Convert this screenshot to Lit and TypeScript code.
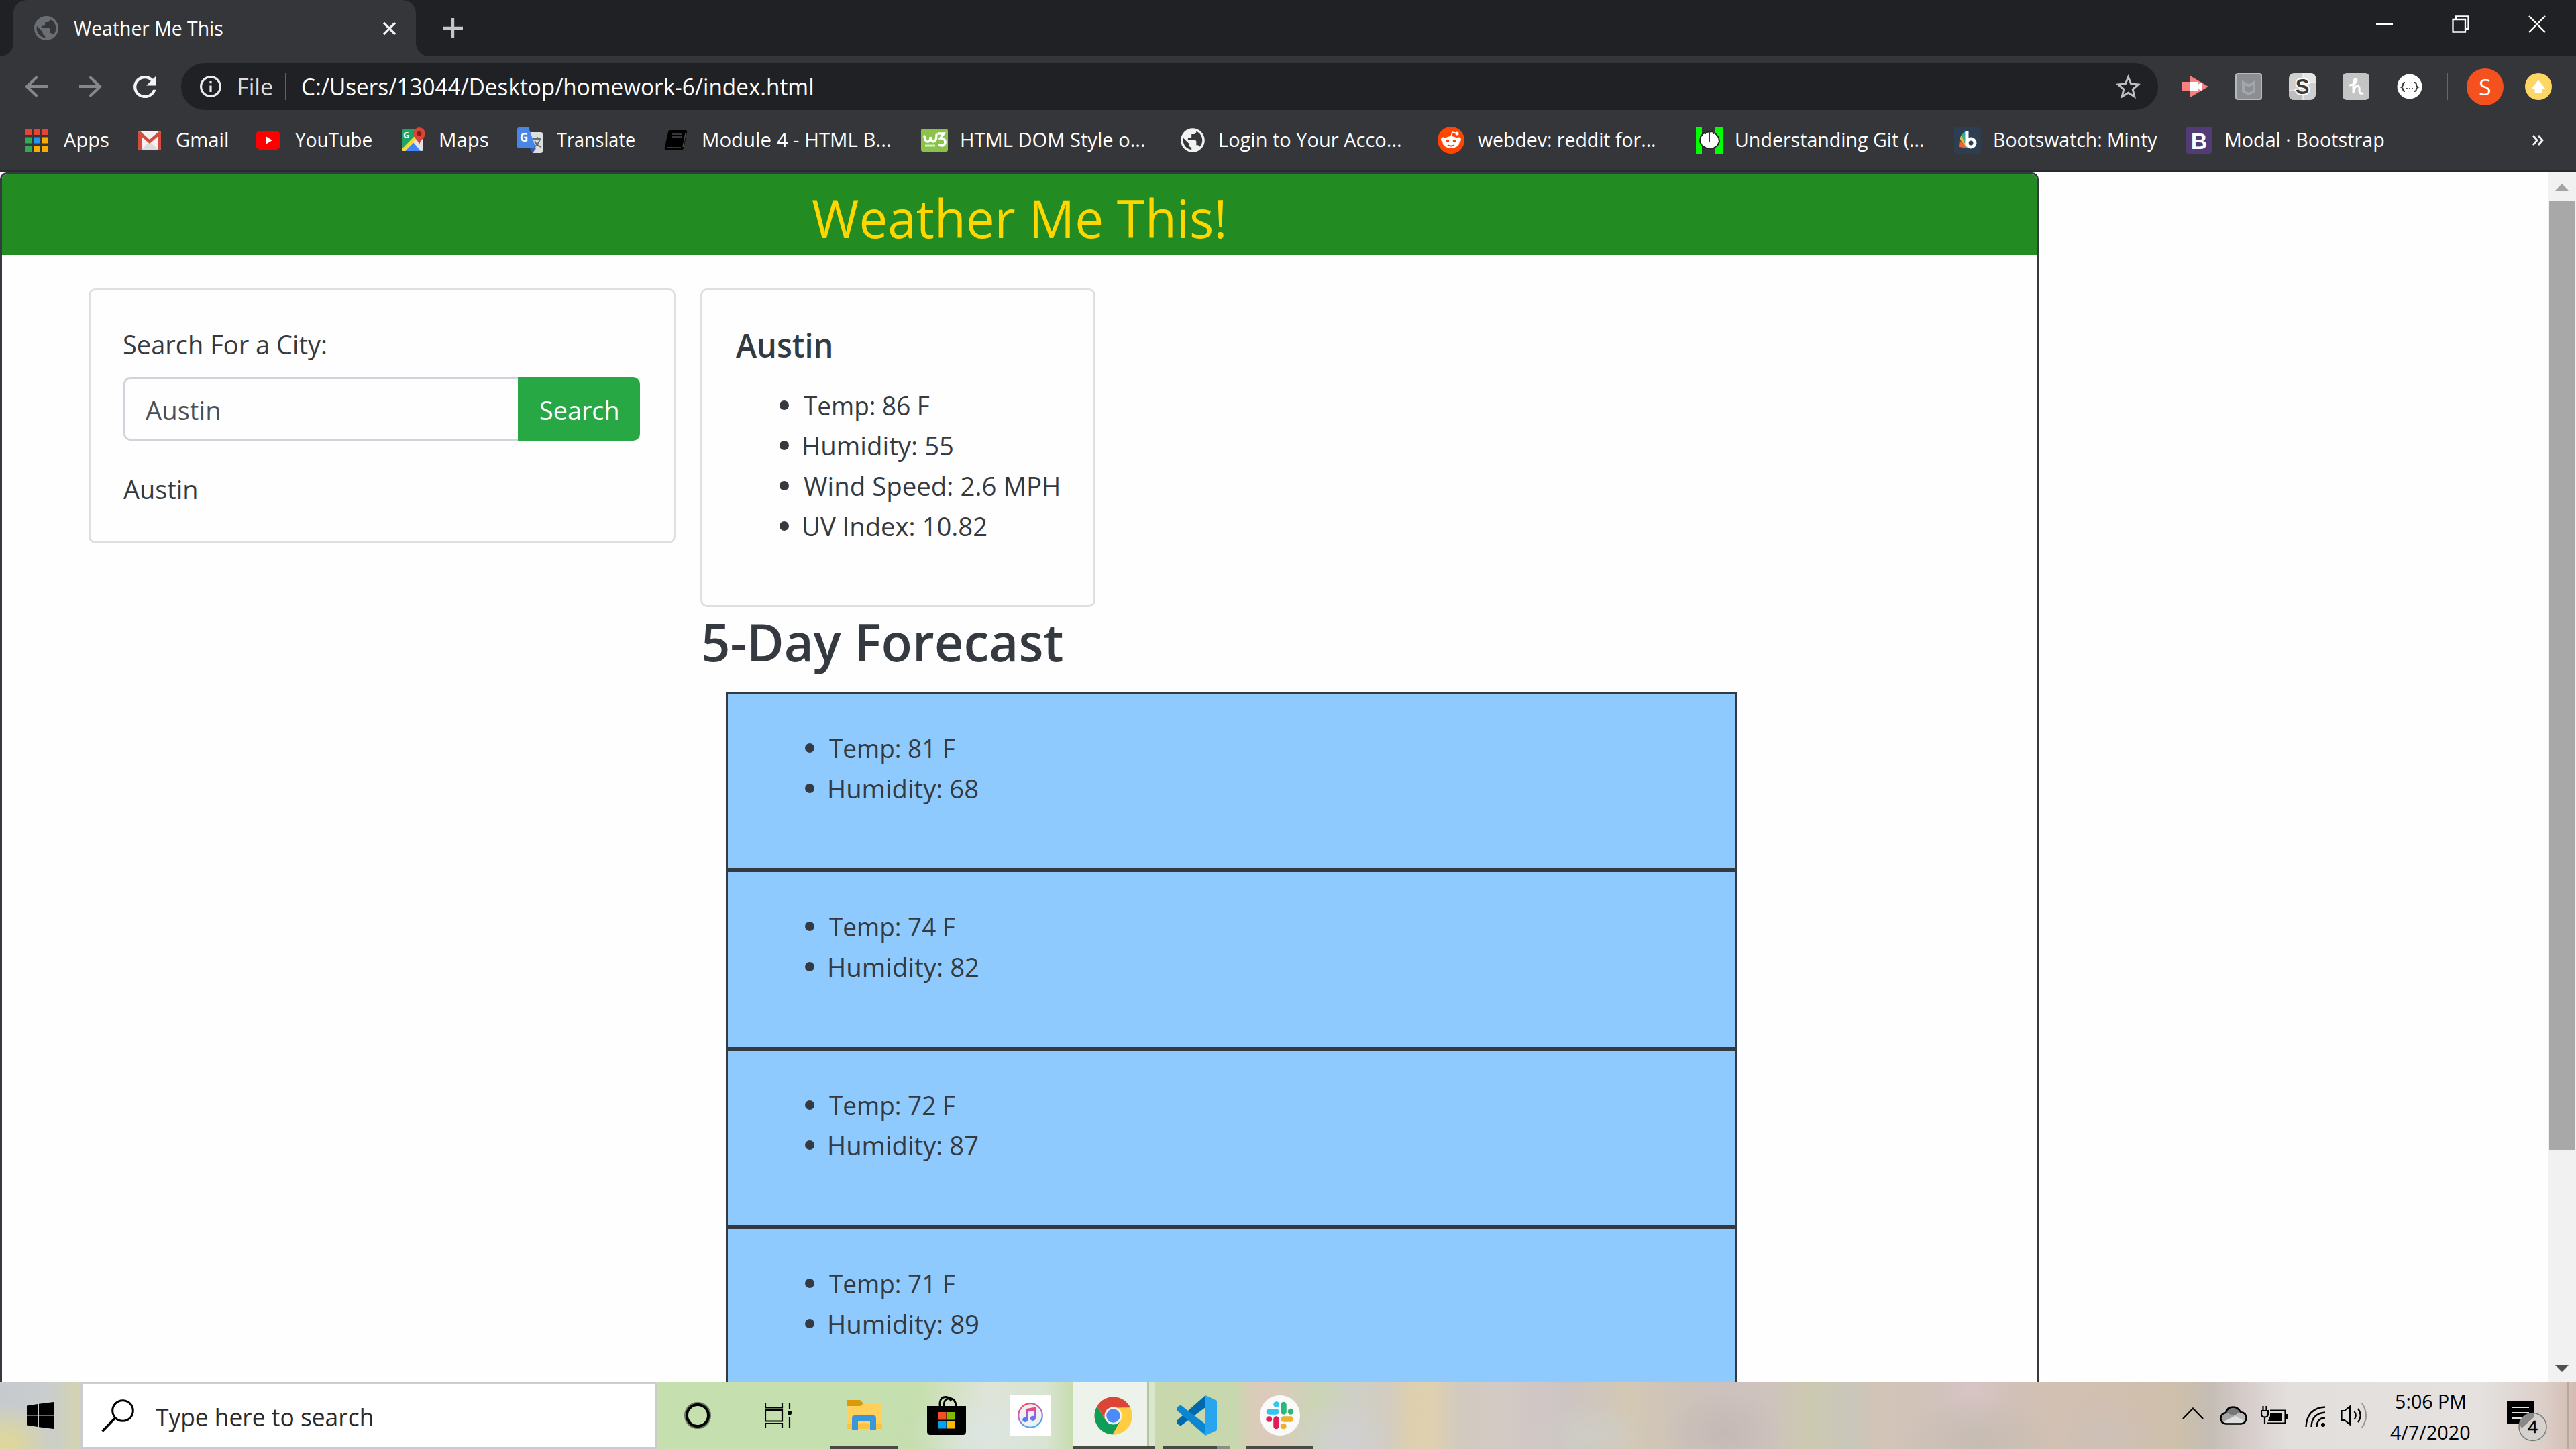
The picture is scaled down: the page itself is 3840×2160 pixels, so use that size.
import { LitElement, html, css, svg, TemplateResult } from "lit";
import { customElement, property } from "lit/decorators.js";

/** One line of text whose visible strokes start at the box's left edge and span exactly `w` pixels. */
@customElement("fit-text")
class FitText extends LitElement {
  @property() text = "";
  @property({ type: Number }) w = 0;

  static styles = css`
    :host { display: block; white-space: pre; flex: none; }
    .run { display: inline-block; transform-origin: 0 50%; }
  `;

  updated() {
    const run = this.renderRoot.querySelector(".run") as HTMLElement;
    const cs = getComputedStyle(this);
    const ctx = document.createElement("canvas").getContext("2d")!;
    ctx.font = `${cs.fontWeight} ${cs.fontSize} ${cs.fontFamily}`;
    const m = ctx.measureText(this.text);
    const scale = this.w / (m.actualBoundingBoxRight + m.actualBoundingBoxLeft);
    this.style.width = `${this.w}px`;
    run.style.transform = `translateX(${m.actualBoundingBoxLeft * scale}px) scaleX(${scale})`;
  }

  render() {
    return html`<span class="run">${this.text}</span>`;
  }
}

const fit = (text: string, w: number) => html`<fit-text .text=${text} .w=${w}></fit-text>`;

const icon = (w: number, h: number, box: string, body: TemplateResult | unknown) =>
  html`<svg width=${w} height=${h} viewBox=${box} preserveAspectRatio="none" fill="none">${body}</svg>`;

const GLOBE =
  "M12 2C6.48 2 2 6.48 2 12s4.48 10 10 10 10-4.48 10-10S17.52 2 12 2zm-1 17.93c-3.95-.49-7-3.85-7-7.93 0-.62.08-1.21.21-1.79L9 15v1c0 1.1.9 2 2 2v1.93zm6.9-2.54c-.26-.81-1-1.39-1.9-1.39h-1v-3c0-.55-.45-1-1-1H8v-2h2c.55 0 1-.45 1-1V7h2c1.1 0 2-.9 2-2v-.41c2.93 1.19 5 4.06 5 7.41 0 2.08-.8 3.97-2.1 5.39z";

const globe = (size: number, color: string) => icon(size, size, "2 2 20 20", svg`<path fill=${color} d=${GLOBE} />`);

const APPS_COLORS = ["#ea4335", "#ea4335", "#ea4335", "#34a853", "#2196f3", "#f9ab00", "#34a853", "#f9ab00", "#f9ab00"];

const marks = {
  apps: icon(40, 40, "0 0 40 40", APPS_COLORS.map((c, i) => svg`<rect x=${3 + (i % 3) * 12.5} y=${3 + Math.floor(i / 3) * 12.5} width="9" height="9" fill=${c} />`)),
  gmail: icon(40, 40, "0 0 40 40", svg`
    <rect x="3" y="7" width="34" height="27" rx="2" fill="#f2f2f2" />
    <path d="M7 34 L20 22 L33 34Z" fill="#dcdcdc" />
    <path d="M3 9 Q3 7 5 7 L8 8 V34 H5 Q3 34 3 32Z M37 9 Q37 7 35 7 L32 8 V34 H35 Q37 34 37 32Z" fill="#d54b3d" />
    <path d="M5 9 L20 22 L35 9" stroke="#d54b3d" stroke-width="4.5" />`),
  youtube: icon(40, 40, "0 0 40 40", svg`
    <rect x="1" y="6" width="37" height="28" rx="7" fill="#f00" /><path d="M16 14 L26 20 L16 26Z" fill="#fff" />`),
  maps: icon(40, 40, "0 0 40 40", svg`
    <rect x="3" y="4" width="31" height="32" rx="3" fill="#1fa463" />
    <path d="M3 34 L32 7 L34 9 V34 Q34 36 32 36 H5Z" fill="#e8e8e8" />
    <path d="M8 36 L20 23 L31 36Z" fill="#4285f4" />
    <path d="M3 33 L27 9 L32 13 L8 36 H6 Q3 36 3 33Z" fill="#fdd835" />
    <path d="M20 22 L34 36 V22 L28 16Z" fill="#e4e4e4" />
    <path d="M29 1 A9 9 0 0 1 38 10 C38 17 31 18 29 27 C27 18 20 17 20 10 A9 9 0 0 1 29 1Z" fill="#db4437" />
    <circle cx="29" cy="10" r="3.4" fill="#7b231c" />
    <text x="5" y="17" font-size="13" font-weight="700" fill="#fff">G</text>`),
  translate: icon(40, 40, "0 0 40 40", svg`
    <path d="M15 8 H36 Q39 8 39 11 V36 Q39 39 36 39 H24Z" fill="#dedede" />
    <path d="M4 1 H18 L29 32 H4 Q1 32 1 29 V4 Q1 1 4 1Z" fill="#4a86e8" />
    <path d="M20 32 H29 L24 39Z" fill="#3159b8" />
    <path d="M25 18 H37 M31 15 V18 M35 18 Q33 26 26 30 M27 21 Q30 28 37 30" stroke="#5f6f78" stroke-width="2" />
    <text x="5" y="22" font-size="17" font-weight="700" fill="#fff">G</text>`),
  book: icon(40, 40, "0 0 40 40", svg`
    <path d="M11 5 H34 Q37 5 36 8 L31 32 Q30 35 27 35 H6 Q2 35 3 30 L8 8 Q9 5 11 5Z" fill="#000" />
    <path d="M14 11 H29 M13 15 H28 M6 31 H27 M34 10 L30 30" stroke="#4a4a4d" stroke-width="1.5" />`),
  w3: icon(40, 40, "0 0 40 40", svg`
    <rect y="3" width="40" height="34" rx="3" fill="#8bc34a" />
    <path d="M5 14 Q6 23 11 22 Q14 21 14 15 Q15 22 19 22 Q23 21 23 12" stroke="#fff" stroke-width="3.4" stroke-linecap="round" />
    <path d="M26 10 H34 L29 17 Q36 17 36 23 Q35 30 27 27" stroke="#fff" stroke-width="3.6" stroke-linecap="round" />
    <path d="M6 28 H21" stroke="#d9f0bd" stroke-width="3" />`),
  globe: icon(40, 40, "0.8 0.8 22.4 22.4", svg`<path fill="#f1f1f1" d=${GLOBE} />`),
  reddit: icon(40, 40, "0 0 40 40", svg`
    <circle cx="20" cy="20" r="20" fill="#ff4500" />
    <path d="M20 15 L22 8 L28 9.5" stroke="#fff" stroke-width="1.8" /><circle cx="29" cy="10" r="2.6" fill="#fff" />
    <circle cx="8.5" cy="19" r="3.4" fill="#fff" /><circle cx="31.5" cy="19" r="3.4" fill="#fff" />
    <ellipse cx="20" cy="23" rx="12.5" ry="9" fill="#fff" />
    <circle cx="15" cy="21" r="2.3" fill="#ff4500" /><circle cx="25" cy="21" r="2.3" fill="#ff4500" />
    <path d="M15 27 Q20 30 25 27" stroke="#ff4500" stroke-width="1.8" />`),
  git: icon(40, 40, "0 0 40 40", svg`
    <rect width="9" height="40" fill="#0f0" /><rect x="29" width="11" height="40" fill="#0f0" />
    <path d="M11 10 L16 8 L24 7 L30 11 L34 16 L35 22 L32 28 L26 32 L16 32 L9 28 L6 22 L7 15Z" fill="#fff" stroke="#222" stroke-width="2" />
    <path d="M20 7 V22 M14 6 V11 M26 6 V11" stroke="#333" stroke-width="2" />`),
  bootswatch: icon(40, 40, "0 0 40 40", svg`
    <rect width="40" height="40" rx="4" fill="#2c3e50" />
    <path d="M15 8 L20 6 L21 30 L18 32Z" fill="#36b3e6" /><path d="M11 12 L15 8 L19 32Z" fill="#2fb29a" />
    <path d="M8 18 L11 12 L19 32Z" fill="#f3b52f" /><path d="M7 30 L8 20 L21 32Z" fill="#f2603c" />
    <path d="M19 7 V28" stroke="#fff" stroke-width="5" /><circle cx="25" cy="24" r="6" stroke="#fff" stroke-width="5" />`),
  bootstrap: icon(40, 40, "0 0 40 40", svg`
    <rect width="40" height="40" rx="5" fill="#533b78" />
    <text x="20" y="32.5" text-anchor="middle" font-size="34" font-weight="700" fill="#fff" font-family="Liberation Sans, sans-serif">B</text>`),
};

/** Bookmark bar entries: icon, label, label width, distance to the next entry. */
const BOOKMARKS: [TemplateResult, string, number, number][] = [
  [marks.apps, "Apps", 67, 168],
  [marks.gmail, "Gmail", 76, 177],
  [marks.youtube, "YouTube", 114, 216],
  [marks.maps, "Maps", 72, 174],
  [marks.translate, "Translate", 116, 218],
  [marks.book, "Module 4 - HTML B...", 279, 385],
  [marks.w3, "HTML DOM Style o...", 273, 385],
  [marks.globe, "Login to Your Acco...", 270, 385],
  [marks.reddit, "webdev: reddit for...", 264, 385],
  [marks.git, "Understanding Git (...", 279, 385],
  [marks.bootswatch, "Bootswatch: Minty", 243, 345],
  [marks.bootstrap, "Modal · Bootstrap", 236, 300],
];

@customElement("browser-chrome")
class BrowserChrome extends LitElement {
  static styles = css`
    :host { display: block; height: 257px; background: #35363a; color: #fff; }
    svg { display: block; flex: none; }
    .strip { height: 84px; background: #202124; display: flex; align-items: center; box-sizing: border-box; padding-left: 20px; }
    .tab { position: relative; width: 600px; height: 84px; box-sizing: border-box; background: #35363a; border-radius: 20px 20px 0 0; display: flex; align-items: center; padding: 0 29px 0 31px; font-size: 29px; }
    .tab::before, .tab::after { content: ""; position: absolute; bottom: 0; width: 20px; height: 20px; }
    .tab::before { left: -20px; background: radial-gradient(circle at 0 0, #202124 19.5px, #35363a 20.5px); }
    .tab::after { right: -20px; background: radial-gradient(circle at 100% 0, #202124 19.5px, #35363a 20.5px); }
    .tab fit-text { margin: -2px 0 0 23px; }
    .tab .close { margin-left: auto; }
    .plus { margin-left: 40px; }
    .win { margin-left: auto; display: flex; align-items: center; gap: 88px; padding: 0 45px 13px 0; }
    .toolbar { height: 80px; display: flex; align-items: center; padding-top: 10px; box-sizing: border-box; }
    .nav { display: flex; gap: 47px; padding-left: 37px; }
    .omni { margin-left: 37px; width: 2947px; height: 70px; border-radius: 35px; background: #202124; display: flex; align-items: center; box-sizing: border-box; padding: 0 26px 0 28px; font-size: 34px; }
    .file { margin-left: 26px; color: #dadce0; }
    .bar { width: 2px; height: 40px; background: #5f6368; margin: 0 24px 0 19px; }
    .star { margin-left: auto; }
    .ext { display: flex; align-items: center; gap: 40px; margin-left: 35px; }
    .divider { width: 2px; height: 40px; background: #66686c; margin-left: 35px; }
    .avatar { width: 55px; height: 55px; border-radius: 50%; background: #f4511e; margin-left: 28px; display: flex; align-items: center; justify-content: center; font-size: 32px; }
    .update { margin-left: 32px; }
    .marks { height: 90px; display: flex; align-items: center; box-sizing: border-box; padding-left: 35px; font-size: 29px; }
    .mark { display: flex; align-items: center; gap: 20px; flex: none; }
    .mark fit-text { margin-top: -4px; }
    .more { margin-left: auto; padding-right: 48px; }
    .edge { height: 3px; background: #292a2d; }
  `;

  render() {
    return html`
      <div class="strip">
        <div class="tab">
          ${globe(36, "#6b6e73")}
          ${fit("Weather Me This", 222)}
          <div class="close">${icon(21, 21, "0 0 21 21", svg`<path d="M2 2 L19 19 M19 2 L2 19" stroke="#f1f1f1" stroke-width="3.4" />`)}</div>
        </div>
        <div class="plus">${icon(30, 30, "0 0 30 30", svg`<path d="M15 0 V30 M0 15 H30" stroke="#c4c6c9" stroke-width="4.4" />`)}</div>
        <div class="win">
          ${icon(25, 25, "0 0 25 25", svg`<path d="M0 13 H25" stroke="#fff" stroke-width="2.4" />`)}
          ${icon(26, 26, "0 0 26 26", svg`<path d="M1.5 6 H20 V24.5 H1.5Z M6 6 V1.5 H24.5 V20 H20" stroke="#fff" stroke-width="2.3" />`)}
          ${icon(26, 26, "0 0 26 26", svg`<path d="M1 1 L25 25 M25 1 L1 25" stroke="#fff" stroke-width="2.4" />`)}
        </div>
      </div>
      <div class="toolbar">
        <div class="nav">
          ${icon(34, 32, "4 4 16 16", svg`<path fill="#85878a" d="M20 11H7.83l5.59-5.59L12 4l-8 8 8 8 1.41-1.41L7.83 13H20v-2z" />`)}
          ${icon(34, 32, "4 4 16 16", svg`<path fill="#85878a" d="M4 13h12.17l-5.59 5.59L12 20l8-8-8-8-1.41 1.41L16.17 11H4v2z" />`)}
          ${icon(34, 33, "4 4 16 16", svg`<path fill="#f1f3f4" d="M17.65 6.35C16.2 4.9 14.21 4 12 4c-4.42 0-7.99 3.58-7.99 8s3.57 8 7.99 8c3.73 0 6.84-2.55 7.73-6h-2.08c-.82 2.33-3.04 4-5.65 4-3.31 0-6-2.69-6-6s2.69-6 6-6c1.66 0 3.14.69 4.22 1.78L13 11h7V4l-2.35 2.35z" />`)}
        </div>
        <div class="omni">
          ${icon(32, 32, "2 2 20 20", svg`<path fill="#e8eaed" d="M11 17h2v-6h-2v6zm1-15C6.48 2 2 6.48 2 12s4.48 10 10 10 10-4.48 10-10S17.52 2 12 2zm0 18c-4.41 0-8-3.59-8-8s3.59-8 8-8 8 3.590 8 8-3.590 8-8 8zM11 9h2V7h-2v2z" />`)}
          <div class="file">${fit("File", 50)}</div>
          <div class="bar"></div>
          ${fit("C:/Users/13044/Desktop/homework-6/index.html", 760)}
          <div class="star">${icon(37, 36, "2 2 20 19", svg`<path fill="#bdc1c6" d="M22 9.24l-7.19-.62L12 2 9.19 8.63 2 9.24l5.46 4.73L5.82 21 12 17.27 18.18 21l-1.63-7.03L22 9.24zM12 15.4l-3.76 2.27 1-4.28-3.32-2.88 4.38-.38L12 6.1l1.71 4.04 4.38.38-3.32 2.88 1 4.28L12 15.4z" />`)}</div>
        </div>
        <div class="ext">
          ${icon(40, 40, "0 0 40 40", svg`
            <path d="M0 13 H12 V3.500 L40 20 L12 36.500 V27 H0Z" fill="#fa7f7f" />
            <path d="M13 13 H24 V17 L30 13.500 V26.500 L24 23 V27 H13Z" fill="#fff" />`)}
          ${icon(40, 40, "0 0 40 40", svg`
            <rect x="1" y="1" width="38" height="38" rx="3" fill="#8c8f92" stroke="#b3bac1" stroke-width="2" />
            <path d="M12 14 L20 19 L28 14 V27 L20 31 L12 27Z" stroke="#a3a7ab" stroke-width="4" />`)}
          ${icon(40, 40, "0 0 40 40", svg`
            <rect width="40" height="40" rx="8" fill="#cfcfcf" />
            <path d="M21 0 H32 Q40 0 40 8 V14 H21Z" fill="#e6e6e6" /><path d="M0 26 H21 V40 H8 Q0 40 0 32Z" fill="#bdbdbd" />
            <path d="M21 0 V40 M0 26 H18 M24 14 H40" stroke="#f5f5f5" stroke-width="1.2" />
            <text x="20" y="31" text-anchor="middle" font-size="31" font-weight="700" fill="#3a3a3a" stroke="#fff" stroke-width="4" paint-order="stroke" font-family="Liberation Sans, sans-serif">S</text>`)}
          ${icon(40, 40, "0 0 40 40", svg`
            <rect width="40" height="40" rx="6" fill="#c4c4c4" />
            <path d="M11 18 Q20 17 21 11 Q21 8 18.500 9 Q16 11 16 19 V30 Q17 20 22 19 Q26 19 25 26 Q25 31 30 30" stroke="#fff" stroke-width="3" stroke-linecap="round" />`)}
          ${icon(40, 40, "0 0 40 40", svg`
            <circle cx="20" cy="20" r="18.500" fill="#fff" />
            <path d="M13 14 Q10 14 10 17 Q10 20 7.500 21 Q10 22 10 24 Q10 27 13 27 M27 14 Q30 14 30 17 Q30 20 32.500 21 Q30 22 30 24 Q30 27 27 27" stroke="#333" stroke-width="1.800" />
            <circle cx="16" cy="23" r="1.100" fill="#333" /><circle cx="20" cy="23" r="1.100" fill="#333" /><circle cx="24" cy="23" r="1.100" fill="#333" />`)}
        </div>
        <div class="divider"></div>
        <div class="avatar">${fit("S", 17)}</div>
        <div class="update">${icon(40, 40, "0 0 40 40", svg`<circle cx="20" cy="20" r="20" fill="#fdd663" /><path d="M20 10 L30 23 H25.500 V30 H14.500 V23 H10Z" fill="#fff" />`)}</div>
      </div>
      <div class="marks">
        ${BOOKMARKS.map(([glyph, label, w, pitch]) => html`<div class="mark" style="width:${pitch}px">${glyph}${fit(label, w)}</div>`)}
        <div class="more">${icon(17, 16, "0 0 17 16", svg`<path d="M1 1 L7 8 L1 15 M9 1 L15 8 L9 15" stroke="#f1f3f4" stroke-width="2.800" />`)}</div>
      </div>
      <div class="edge"></div>
    `;
  }
}

type Reading = [string, number];
const CURRENT: Reading[] = [["Temp: 86 F", 188], ["Humidity: 55", 222], ["Wind Speed: 2.6 MPH", 380], ["UV Index: 10.82", 272]];
const FORECAST: Reading[][] = [
  [["Temp: 81 F", 188], ["Humidity: 68", 222]],
  [["Temp: 74 F", 188], ["Humidity: 82", 222]],
  [["Temp: 72 F", 188], ["Humidity: 87", 222]],
  [["Temp: 71 F", 188], ["Humidity: 89", 222]],
];

@customElement("weather-page")
class WeatherPage extends LitElement {
  static styles = css`
    :host { display: flex; height: 1803px; background: #fefefe; color: #343a40; font-size: 38.5px; line-height: 60px; overflow: hidden; }
    .view { flex: 1; overflow: hidden; }
    .container { width: 3039px; height: 1900px; box-sizing: border-box; border: 3px solid #343a40; border-radius: 10px; overflow: hidden; }
    .banner { height: 120px; background: #228b22; color: #ffd700; font-size: 78px; display: flex; justify-content: center; align-items: center; padding: 10px 5px 0 0; box-sizing: border-box; }
    .cols { display: flex; align-items: flex-start; gap: 37px; padding: 50px 0 0 129px; }
    .card { border: 3px solid #dfdfdf; border-radius: 10px; box-sizing: border-box; padding: 50px; }
    .search { width: 875px; height: 380px; padding-left: 49px; }
    .group { display: flex; height: 95px; margin: 19px 0 42px; width: 770px; }
    .input { flex: 1; border: 3px solid #ced4da; border-right: 0; border-radius: 10px 0 0 10px; color: #495057; display: flex; align-items: center; padding: 3px 0 0 30px; }
    .btn { width: 182px; box-sizing: border-box; padding-top: 3px; background: #28a745; color: #fff; border-radius: 0 10px 10px 0; display: flex; align-items: center; justify-content: center; }
    .city { width: 589px; height: 475px; padding-top: 52px; }
    .name { font-size: 48px; font-weight: 600; margin-bottom: 29px; }
    ul { list-style: none; margin: 0; padding: 0; }
    li { display: flex; align-items: center; gap: 22px; height: 60px; }
    .dot { width: 14px; height: 14px; border-radius: 50%; background: #343a40; }
    .city ul { padding-left: 65px; }
    .title { font-size: 77px; font-weight: 600; line-height: 104px; padding-left: 5px; margin-bottom: 22px; }
    .days { width: 1508px; margin-left: 38px; }
    .day { height: 266px; box-sizing: border-box; border: 3px solid #343a40; background: #8fcaff; padding: 51px 0 0 115px; }
    .scroll { width: 42px; background: #f1f1f1; display: flex; flex-direction: column; align-items: center; }
    .up { border: 10px solid transparent; border-top: 0; border-bottom-color: #a3a3a3; margin-top: 17px; }
    .thumb { width: 39px; height: 1415px; background: #a8a8a8; margin-top: 15px; }
    .down { border: 10px solid transparent; border-bottom: 0; border-top-color: #505050; margin-top: auto; margin-bottom: 15px; }
  `;

  readings(list: Reading[]) {
    return html`<ul>${list.map(([text, w]) => html`<li><span class="dot"></span>${fit(text, w)}</li>`)}</ul>`;
  }

  render() {
    return html`
      <div class="view">
        <div class="container">
          <div class="banner">${fit("Weather Me This!", 613)}</div>
          <div class="cols">
            <div class="card search">
              ${fit("Search For a City:", 302)}
              <div class="group">
                <div class="input">${fit("Austin", 110)}</div>
                <div class="btn">${fit("Search", 116)}</div>
              </div>
              ${fit("Austin", 109)}
            </div>
            <div class="right">
              <div class="card city">
                <div class="name">${fit("Austin", 142)}</div>
                ${this.readings(CURRENT)}
              </div>
              <div class="title">${fit("5-Day Forecast", 535)}</div>
              <div class="days">${FORECAST.map((d) => html`<div class="day">${this.readings(d)}</div>`)}</div>
            </div>
          </div>
        </div>
      </div>
      <div class="scroll"><div class="up"></div><div class="thumb"></div><div class="down"></div></div>
    `;
  }
}

@customElement("task-bar")
class TaskBar extends LitElement {
  static styles = css`
    :host {
      display: flex; height: 100px; color: #000; overflow: hidden;
      background:
        radial-gradient(ellipse 75px 60px at 8px 92px, #ddd69e 20%, transparent),
        radial-gradient(ellipse 110px 60px at 1465px 75px, #dce5e0, transparent),
        radial-gradient(ellipse 60px 60px at 1370px 80px, #c6deb0, transparent),
        radial-gradient(ellipse 80px 60px at 2000px 85px, #d2d0d2, transparent),
        radial-gradient(ellipse 90px 50px at 2370px 80px, #cfcdc6, transparent),
        radial-gradient(ellipse 90px 60px at 2570px 75px, #c4b9b5, transparent),
        radial-gradient(ellipse 120px 70px at 2950px 90px, #c6bcb2, transparent),
        radial-gradient(ellipse 60px 60px at 2940px 15px, #d8c4c4, transparent),
        radial-gradient(ellipse 80px 60px at 3140px 80px, #cdc0b8, transparent),
        linear-gradient(90deg, #c6cace 0, #c9cdce 70px, #d3d3b2 118px, #c6dfae 985px, #c6dfae 1370px, #dfe4d8 1470px, #d8e4d0 1560px, #c7dcae 1600px, #c8d8ac 1740px, #c8d8ae 1840px, #d9cdb8 1868px, #dccabb 1890px, #cad5b6 1965px, #cfcfc6 2020px, #d3ccc0 2070px, #decfb0 2100px, #dfd0af 2135px, #d2cabf 2175px, #d3cac6 2250px, #cdc4c4 2330px, #d0c7bb 2390px, #d4c8b4 2425px, #cfc4b8 2490px, #cdc1be 2570px, #cfc3be 2640px, #ccc9b0 2695px, #c9c6bb 2760px, #d2c4b6 2800px, #d0c1bd 2930px, #d2c0b3 3050px, #d1bfae 3190px, #cdc0ab 3250px, #c4bdb4 3295px, #d5cbc9 3345px, #e3dfdd 3410px, #e4e1df 3700px, #dccfc9 3790px, #d3bbb1 3840px);
    }
    svg { display: block; flex: none; }
    .start { width: 120px; display: flex; align-items: center; padding-left: 40px; box-sizing: border-box; }
    .box { width: 860px; box-sizing: border-box; border: 3px solid #ccc; background: #fff; display: flex; align-items: center; padding: 0 0 0 28px; color: #2b2b2b; font-size: 36.5px; flex: none; }
    .box fit-text { margin-left: 32px; padding-top: 4px; }
    .app { width: 101px; display: flex; align-items: center; justify-content: center; flex: none; position: relative; }
    .wide { width: 120px; }
    .open::after { content: ""; position: absolute; left: 0; right: 0; bottom: 0; height: 5px; background: #4b4944; }
    .code::after { background: linear-gradient(90deg, #4b4944 81px, #8d8d86 81px); }
    .explorer { margin-left: 17px; }
    .store { margin-left: 22px; }
    .music { margin-left: 24px; }
    .chrome { width: 121px; margin-left: 14px; box-sizing: border-box; padding-right: 2px; background: linear-gradient(90deg, #edf3ea 110px, #b4c5a6 110px 113px, #d9e8cc 113px); }
    .code { margin-left: 12px; }
    .slack { margin-left: 23px; }
    .tray { margin-left: auto; display: flex; align-items: center; font-size: 29px; }
    .chev { margin-bottom: 6px; }
    .cloud { margin-left: 24px; }
    .power { margin-left: 20px; }
    .wifi { margin-left: 25px; padding-top: 3px; }
    .vol { margin-left: 22px; }
    .clock { margin-left: 33px; padding-top: 3px; display: flex; flex-direction: column; align-items: center; line-height: 46px; }
    .note { margin-left: 55px; padding-top: 19px; }
    .peek { width: 3px; height: 100px; background: #b5a9a5; margin: 0 10px 0 29px; }
  `;

  render() {
    return html`
      <div class="start">${icon(40, 40, "0 0 40 40", svg`<path fill="#000" d="M0 5.500 L16.500 3 V19 H0Z M18 2.800 L40 0 V19 H18Z M0 20.500 H16.500 V37 L0 34.500Z M18 20.500 H40 V40 L18 37.200Z" />`)}</div>
      <div class="box">
        ${icon(49, 49, "0 0 49 49", svg`<circle cx="32" cy="17" r="15.300" stroke="#000" stroke-width="3" /><path d="M21 27.500 L1.500 47.500" stroke="#000" stroke-width="3.400" />`)}
        ${fit("Type here to search", 323)}
      </div>
      <div class="app wide">${icon(40, 40, "0 0 40 40", svg`<circle cx="20" cy="20" r="18" stroke="#000" stroke-opacity=".45" stroke-width="4" /><circle cx="20" cy="20" r="16" stroke="#000" stroke-width="4" />`)}</div>
      <div class="app wide">${icon(40, 38, "0 0 40 38", svg`<path d="M1 0 V7.500 H26 V0 M1 38 V31 H26 V38 M1 11 H26 V27.500 H1Z M37 0 V9 M37 21 V38" stroke="#000" stroke-width="2.200" /><rect x="34" y="12" width="6" height="6" rx="2" fill="#000" />`)}</div>
      <div class="app explorer open">${icon(54, 46, "0 0 54 46", svg`
        <path d="M1 0 H21 L26 5 V12 H1Z" fill="#d99a0b" /><path d="M1 9 H22 L27 4.500 H52 Q54 4.500 54 7 V43 H1Z" fill="#ffd15c" />
        <path d="M1 36 H54 V43 H1Z" fill="#f8c33e" />
        <path d="M9 45 V27 Q9 23 13 23 H41 Q45 23 45 27 V45 H36 V32 H18 V45Z" fill="#3a96dd" />`)}</div>
      <div class="app store">${icon(58, 58, "0 0 58 58", svg`
        <path d="M19 16 V10 Q20 1.500 28 1.500 Q33 1.500 36 8 M25 16 V12 Q26 3.500 34 3.500 Q43 4.500 43 16" stroke="#000" stroke-width="2.800" />
        <path d="M0 15 H58 V53 Q58 58 53 58 H5 Q0 58 0 53Z" fill="#000" />
        <rect x="17" y="24" width="11.500" height="11.500" fill="#f25022" /><rect x="30" y="24" width="11.500" height="11.500" fill="#7fba00" />
        <rect x="17" y="37" width="11.500" height="11.500" fill="#00a4ef" /><rect x="30" y="37" width="11.500" height="11.500" fill="#ffb900" />`)}</div>
      <div class="app music">${icon(60, 60, "0 0 60 60", svg`
        <defs>
          <linearGradient id="ring" x1=".3" y1="0" x2=".6" y2="1"><stop offset="0" stop-color="#fa4b5a" /><stop offset=".5" stop-color="#b06be0" /><stop offset="1" stop-color="#38b6f5" /></linearGradient>
          <linearGradient id="tune" x1="0" y1="0" x2="0" y2="1"><stop offset="0" stop-color="#f8456b" /><stop offset=".5" stop-color="#a35be0" /><stop offset="1" stop-color="#2f8df5" /></linearGradient>
        </defs>
        <rect width="60" height="60" fill="#fff" /><circle cx="30" cy="30" r="17.800" fill="#f0f0f0" stroke="url(#ring)" stroke-width="2.200" />
        <path d="M24 20 L38 17.500 V34.500 A4.200 3.600 0 1 1 35.500 31 V23 L26.500 24.500 V37 A4.200 3.600 0 1 1 24 33Z" fill="url(#tune)" />`)}</div>
      <div class="app chrome open">${icon(57, 57, "-28.500 -28.500 57 57", svg`
        <circle r="28" fill="#ffcd42" />
        <path d="M-24.200 -14 A28 28 0 0 1 25.500 -12 H0 L-11 6Z" fill="#db4437" />
        <path d="M-24.200 -14 A28 28 0 0 0 -1 28 L11 7 L-11 7Z" fill="#0f9d58" />
        <path d="M-1 28 L12 5 L12 -12 H25.500 A28 28 0 0 1 -1 28Z" fill="#ffcd42" />
        <circle r="13" fill="#f3f3f3" /><circle r="10.300" fill="#4c8bf5" />`)}</div>
      <div class="app code open">${icon(60, 60, "0 0 60 60", svg`
        <path d="M43 0 V18 L6 45.500 L0 42 V38Z" fill="#0068ad" />
        <path d="M6 14.500 L43 43 V60 L0 22 V18Z" fill="#0b86d1" />
        <path d="M43 0 L60 8 V52 L43 60 L40 57 L43 54Z" fill="#27a5ef" />`)}</div>
      <div class="app slack open">${icon(60, 60, "0 0 60 60", svg`
        <circle cx="30" cy="30" r="30" fill="#fafafa" />
        <g stroke-width="8.500" stroke-linecap="round">
          <path d="M24.500 13.500 H25" stroke="#36c5f0" /><path d="M14 24.500 H24.500" stroke="#36c5f0" />
          <path d="M35.500 14 V24.500" stroke="#2eb67d" /><path d="M46 24 V24.500" stroke="#2eb67d" />
          <path d="M46 35.500 H35.500" stroke="#ecb22e" /><path d="M35.500 46 H35" stroke="#ecb22e" />
          <path d="M24.500 46 V35.500" stroke="#e01e5a" /><path d="M14 35.500 H13.500" stroke="#e01e5a" />
        </g>`)}</div>
      <div class="tray">
        <div class="chev">${icon(32, 18, "0 0 32 18", svg`<path d="M1 17 L16 1.500 L31 17" stroke="#000" stroke-width="2.200" />`)}</div>
        <div class="cloud">${icon(41, 28, "0 0 41 28", svg`
          <path d="M9 26.500 Q1.500 25.500 1.500 18 Q2 11 9 10 Q11 1.500 20 1.500 Q27 1.500 31 9 Q39.500 10 39.500 18 Q39 25.500 32 26.500Z" fill="#dedede" />
          <path d="M9 10 Q11 1.500 20 1.500 Q27 1.500 31 9 L20 15Z" fill="#777" /><path d="M9 10 L22 15 L4 24 Q1.500 22 1.500 18 Q2 11 9 10Z" fill="#a3a3a3" />
          <path d="M31 9 L22 14 L38 23 Q39.500 21 39.500 18 Q39.500 10 31 9Z" fill="#bbb" />
          <path d="M9 26.500 Q1.500 25.500 1.500 18 Q2 11 9 10 Q11 1.500 20 1.500 Q27 1.500 31 9 Q39.500 10 39.500 18 Q39 25.500 32 26.500Z" stroke="#000" stroke-width="2.400" />`)}</div>
        <div class="power">${icon(41, 28, "0 0 41 28", svg`
          <path d="M14 6.500 H36.500 V25.500 H10" stroke="#000" stroke-width="2.200" /><rect x="37" y="12" width="4" height="7" fill="#000" />
          <path d="M14 11 H32 V22 H11 L14 15Z" fill="#000" />
          <path d="M1 7 H11 V13 Q10 16.500 6 16.500 Q2 16.500 1 13Z M3.500 0 V7 M8.500 0 V7 M6 17 V27" stroke="#000" stroke-width="2.200" />`)}</div>
        <div class="wifi">${icon(31, 31, "0 0 31 31", svg`
          <path d="M1.500 31 Q3 3 30 1.500 M9.500 31 Q10 11 30 9.500 M17.500 31 Q18 18 30 17.500" stroke="#000" stroke-width="2.300" /><circle cx="27" cy="28" r="3" fill="#000" />`)}</div>
        <div class="vol">${icon(41, 38, "0 0 41 38", svg`
          <path d="M1.500 12 H6 L14 5.500 V32.500 L6 26 H1.500Z M20.500 13 Q25 19 20.500 25 M26 9 Q33.500 19 26 29" stroke="#000" stroke-width="2.200" />
          <path d="M32 1 Q44 19 32 37" stroke="#999" stroke-width="2.200" />`)}</div>
        <div class="clock">${fit("5:06 PM", 104)}${fit("4/7/2020", 119)}</div>
        <div class="note">${icon(61, 61, "0 0 61 61", svg`
          <path d="M0 0 H41 V34 H25 L18 43 V34 H0Z" fill="#000" />
          <path d="M8 9 H33 M8 17 H33 M8 25 H22" stroke="#e4e1df" stroke-width="2.200" />
          <circle cx="38.500" cy="38" r="20.500" fill="#d5d1cf" stroke="#777" stroke-width="1.500" />
          <path d="M19 35 A20.500 20.500 0 0 1 41 18 V23 L22 40Z" fill="#888" />
          <text x="38.500" y="47" text-anchor="middle" font-size="26" fill="#000" stroke="#000" stroke-width=".6">4</text>`)}</div>
        <div class="peek"></div>
      </div>
    `;
  }
}

@customElement("app-root")
class AppRoot extends LitElement {
  static styles = css`
    :host { display: flex; flex-direction: column; width: 3840px; height: 2160px; overflow: hidden; font-family: "Open Sans", "Noto Sans", sans-serif; }
  `;

  render() {
    return html`<browser-chrome></browser-chrome><weather-page></weather-page><task-bar></task-bar>`;
  }
}
